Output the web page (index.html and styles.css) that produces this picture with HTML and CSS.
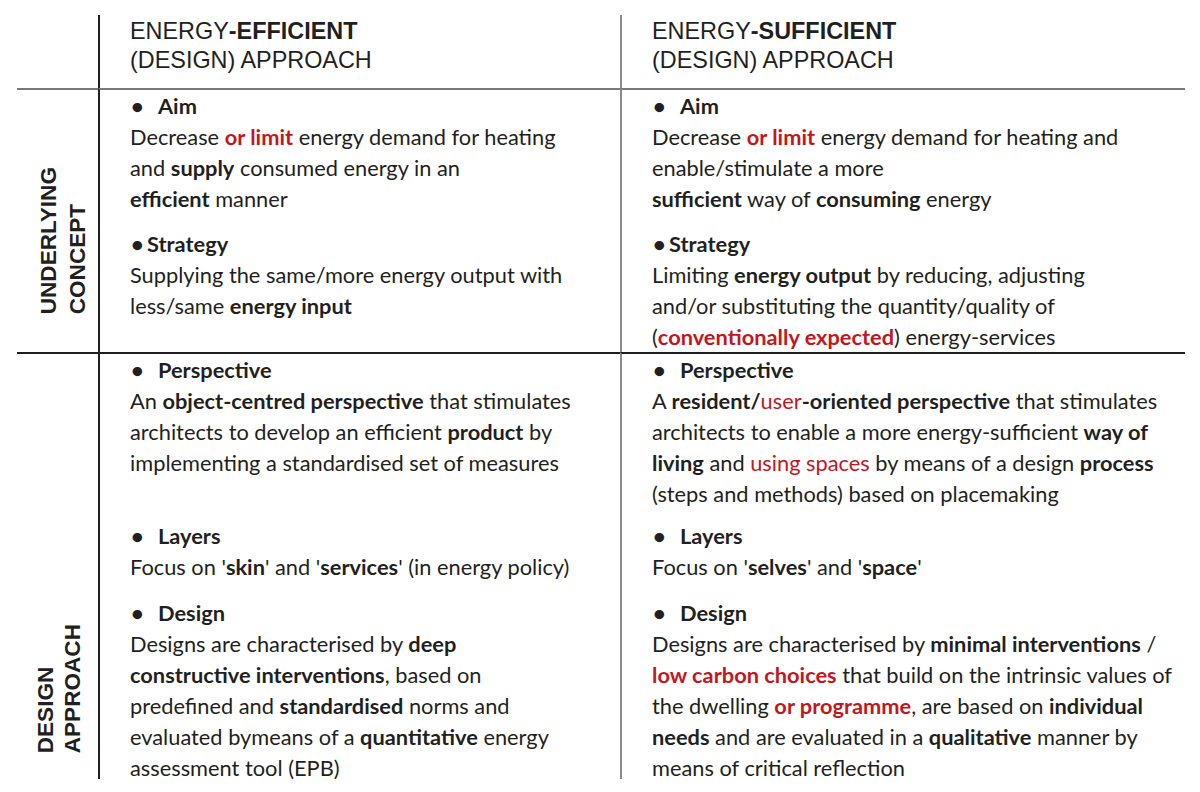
FILE: index.html
```html
<!DOCTYPE html>
<html lang="en">
<head>
<meta charset="utf-8">
<title>Energy-efficient vs energy-sufficient design approach</title>
<link rel="stylesheet" href="styles.css">
</head>
<body>
<div class="table">
  <div class="lab lab0"></div>
  <div class="cell c1 hdr">ENERGY<b>-EFFICIENT</b><br>(DESIGN) APPROACH</div>
  <div class="cell c2 hdr">ENERGY<b>-SUFFICIENT</b><br>(DESIGN) APPROACH</div>

  <div class="lab lab1"><div class="vt vt1">UNDERLYING<br>CONCEPT</div></div>

  <div class="cell c1 r-aim">
    <div class="head"><span class="dot">•</span>Aim</div>
    <div class="txt">Decrease <span class="red b">or limit</span> energy demand for heating<br>and <b>supply</b> consumed energy in an<br><b>efficient</b> manner</div>
  </div>
  <div class="cell c2 r-aim">
    <div class="head"><span class="dot">•</span>Aim</div>
    <div class="txt">Decrease <span class="red b">or limit</span> energy demand for heating and<br>enable/stimulate a more<br><b>sufficient</b> way of <b>consuming</b> energy</div>
  </div>

  <div class="cell c1 r-str">
    <div class="head tight"><span class="dot">•</span>Strategy</div>
    <div class="txt">Supplying the same/more energy output with<br>less/same <b>energy input</b></div>
  </div>
  <div class="cell c2 r-str">
    <div class="head tight"><span class="dot">•</span>Strategy</div>
    <div class="txt">Limiting <b>energy output</b> by reducing, adjusting<br>and/or substituting the quantity/quality of<br>(<span class="red b">conventionally expected</span>) energy-services</div>
  </div>

  <div class="lab lab2"><div class="vt vt2">DESIGN<br>APPROACH</div></div>

  <div class="cell c1 r-per">
    <div class="head"><span class="dot">•</span>Perspective</div>
    <div class="txt">An <b>object-centred perspective</b> that stimulates<br>architects to develop an efficient <b>product</b> by<br>implementing a standardised set of measures</div>
  </div>
  <div class="cell c2 r-per">
    <div class="head"><span class="dot">•</span>Perspective</div>
    <div class="txt">A <b>resident/</b><span class="red">user</span><b>-oriented perspective</b> that stimulates<br>architects to enable a more energy-sufficient <b>way of</b><br><b>living</b> and <span class="red">using spaces</span> by means of a design <b>process</b><br>(steps and methods) based on placemaking</div>
  </div>

  <div class="cell c1 r-lay">
    <div class="head"><span class="dot">•</span>Layers</div>
    <div class="txt">Focus on '<b>skin</b>' and '<b>services</b>' (in energy policy)</div>
  </div>
  <div class="cell c2 r-lay">
    <div class="head"><span class="dot">•</span>Layers</div>
    <div class="txt">Focus on '<b>selves</b>' and '<b>space</b>'</div>
  </div>

  <div class="cell c1 r-des">
    <div class="head"><span class="dot">•</span>Design</div>
    <div class="txt">Designs are characterised by <b>deep</b><br><b>constructive interventions</b>, based on<br>predefined and <b>standardised</b> norms and<br>evaluated bymeans of a <b>quantitative</b> energy<br>assessment tool (EPB)</div>
  </div>
  <div class="cell c2 r-des">
    <div class="head"><span class="dot">•</span>Design</div>
    <div class="txt">Designs are characterised by <b>minimal interventions</b> /<br><span class="red b">low carbon choices</span> that build on the intrinsic values of<br>the dwelling <span class="red b">or programme</span>, are based on <b>individual</b><br><b>needs</b> and are evaluated in a <b>qualitative</b> manner by<br>means of critical reflection</div>
  </div>
</div>
</body>
</html>
```
FILE: styles.css
```css
html, body {
  margin: 0;
  padding: 0;
  background: #ffffff;
}

body {
  color: #231f20;
  font-family: Lato, "Open Sans", sans-serif;
}

.table {
  display: grid;
  grid-template-columns: 81px 522px 565px;
  grid-template-rows: 73px auto auto auto auto auto;
  margin: 15px 0 0 17px;
}

.lab0 { grid-column: 1; grid-row: 1; }

.lab {
  display: flex;
  align-items: flex-end;
  justify-content: flex-start;
}

.lab1 {
  grid-column: 1;
  grid-row: 2 / 4;
  border-top: 2px solid #7a7a7a;
  padding-left: 17px;
  padding-bottom: 38px;
}

.lab2 {
  grid-column: 1;
  grid-row: 4 / 7;
  border-top: 2px solid #1f1f1f;
  padding-left: 15px;
  padding-bottom: 26px;
}

.vt {
  writing-mode: vertical-rl;
  transform: rotate(180deg);
  font-family: "Liberation Sans", Arial, sans-serif;
  font-weight: bold;
  font-size: 22.6px;
  white-space: nowrap;
  color: #231f20;
}

.vt1 { line-height: 29px; }
.vt2 { line-height: 27px; }

.cell {
  padding-left: 30px;
  font-size: 21.8px;
  line-height: 31px;
  white-space: nowrap;
}

.c1 { border-left: 2px solid #1f1f1f; }
.c2 { border-left: 2px solid #8a8a8a; }

.hdr {
  font-family: "Liberation Sans", Arial, sans-serif;
  font-size: 23.4px;
  line-height: 29px;
  padding-top: 2px;
}

.r-aim {
  border-top: 2px solid #7a7a7a;
  padding-bottom: 14px;
}

.r-per {
  border-top: 2px solid #1f1f1f;
  padding-bottom: 11px;
}

.r-lay { padding-bottom: 15px; }

.r-des { margin-bottom: -4px; }

.head {
  font-weight: bold;
}

.dot {
  display: inline-block;
  width: 28px;
  padding-left: 1px;
  box-sizing: border-box;
  font-weight: bold;
}

.head.tight .dot { width: 17px; }

.b, b { font-weight: bold; }

.red { color: #c4161c; }
```
